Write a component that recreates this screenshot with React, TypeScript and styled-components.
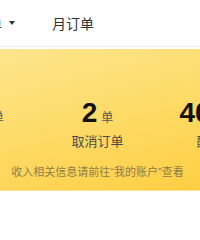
import React from "react";
import { createGlobalStyle, styled } from "styled-components";

const GlobalCss = createGlobalStyle`
  html, body {
    margin: 0;
    padding: 0;
    background: #ffffff;
    font-family: "Liberation Sans", "Noto Sans CJK SC", sans-serif;
    overflow: hidden;
  }
`;

const Viewport = styled.div`
  width: 200px;
  height: 240px;
  overflow: hidden;
`;

const Page = styled.div`
  width: 375px;
  margin-left: -90px;
`;

const Header = styled.div`
  height: 46px;
  display: flex;
  align-items: center;
  padding-left: 50px;
  gap: 37px;
  border-bottom: 1px solid #ececec;
  background: #ffffff;
`;

const Tab = styled.div`
  display: flex;
  align-items: center;
  font-size: 14px;
  color: #333333;
`;

const Caret = styled.span`
  width: 0;
  height: 0;
  margin-left: 7px;
  border-left: 3px solid transparent;
  border-right: 3px solid transparent;
  border-top: 4px solid #333333;
`;

const Card = styled.div`
  margin-top: 2px;
  padding: 48px 0 10px;
  background: linear-gradient(165deg, #fde897 0%, #fddc6c 45%, #ffcc3a 100%);
  border-bottom: 1px solid #fbe38e;
`;

const Stats = styled.div`
  display: grid;
  grid-template-columns: repeat(3, 1fr);
`;

const Stat = styled.div`
  display: flex;
  flex-direction: column;
  align-items: center;
`;

const Value = styled.div`
  display: flex;
  align-items: baseline;
  height: 32px;
  line-height: 32px;
`;

const Number = styled.span`
  font-size: 28px;
  font-weight: 700;
  color: #111111;
`;

const Unit = styled.span`
  margin-left: 4px;
  font-size: 12px;
  color: #555555;
`;

const Label = styled.div`
  margin-top: 4px;
  font-size: 13px;
  line-height: 18px;
  color: #4a4a4a;
`;

const Note = styled.div`
  margin-top: 13px;
  text-align: center;
  font-size: 11px;
  line-height: 16px;
  color: #8c7d4c;
`;

const stats = [
  { value: "128", unit: "单", label: "完成订单" },
  { value: "2", unit: "单", label: "取消订单" },
  { value: "40.50", unit: "元", label: "配送收入" },
];

export default function App() {
  return (
    <Viewport>
      <GlobalCss />
      <Page>
        <Header>
          <Tab>
            日订单
            <Caret />
          </Tab>
          <Tab>月订单</Tab>
        </Header>
        <Card>
          <Stats>
            {stats.map((s) => (
              <Stat key={s.label}>
                <Value>
                  <Number>{s.value}</Number>
                  <Unit>{s.unit}</Unit>
                </Value>
                <Label>{s.label}</Label>
              </Stat>
            ))}
          </Stats>
          <Note>收入相关信息请前往“我的账户”查看</Note>
        </Card>
      </Page>
    </Viewport>
  );
}
